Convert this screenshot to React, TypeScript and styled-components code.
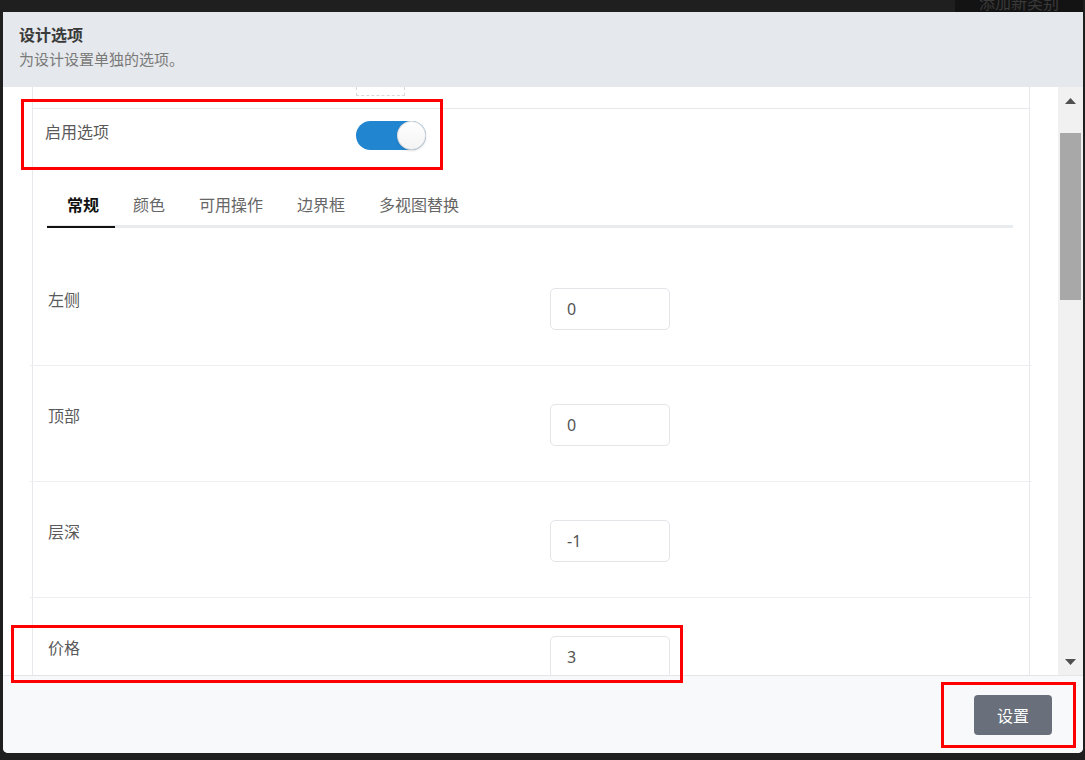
import React, { useState } from "react";
import styled, { createGlobalStyle } from "styled-components";

const GlobalStyle = createGlobalStyle`
  html, body {
    margin: 0;
    padding: 0;
    background: #1f1f1f;
  }
  body {
    font-family: "Noto Sans CJK SC", "Liberation Sans", sans-serif;
  }
`;

interface Field {
  id: string;
  label: string;
  value: string;
}

const fields: Field[] = [
  { id: "left", label: "左侧", value: "0" },
  { id: "top", label: "顶部", value: "0" },
  { id: "depth", label: "层深", value: "-1" },
  { id: "price", label: "价格", value: "3" },
];

const tabs = ["常规", "颜色", "可用操作", "边界框", "多视图替换"];

// red boxes drawn over the screenshot (annotation)
const marks = [
  { x: 21, y: 99, w: 422, h: 71 },
  { x: 11, y: 625, w: 672, h: 58 },
  { x: 941, y: 682, w: 135, h: 66 },
];

const Page = styled.div`
  position: relative;
  width: 1085px;
  height: 760px;
  overflow: hidden;
  background: #1f1f1f;
`;

const TopStrip = styled.div`
  height: 12px;
  display: flex;
  justify-content: flex-end;
  overflow: hidden;
`;

const BackButton = styled.div`
  width: 128px;
  margin-right: 2px;
  background: #131313;
  color: #3a3a3a;
  font-size: 16px;
  line-height: 22px;
  margin-top: -9px;
  height: 22px;
  text-align: center;
`;

const Modal = styled.div`
  margin-left: 3px;
  width: 1080px;
  height: 741px;
  display: flex;
  flex-direction: column;
  border-radius: 0 0 5px 5px;
  overflow: hidden;
  background: #fff;
`;

const Header = styled.div`
  height: 75px;
  box-sizing: border-box;
  padding: 11px 16px 0;
  background: #e5e8ec;
`;

const Title = styled.div`
  font-size: 16px;
  line-height: 22px;
  font-weight: 700;
  color: #3a3a3a;
`;

const Subtitle = styled.div`
  margin-top: 2px;
  font-size: 15px;
  line-height: 24px;
  color: #7a7a7a;
`;

const Body = styled.div`
  height: 588px;
  display: flex;
`;

const Content = styled.div`
  flex: 1;
  overflow: hidden;
  padding: 0 28px 0 29px;
`;

const Panel = styled.div`
  height: 100%;
  border-left: 1px solid #e6e8ec;
  border-right: 1px solid #e6e8ec;
`;

const DashedStub = styled.div`
  margin-left: 323px;
  width: 47px;
  height: 8px;
  border: 1px dashed #d9d9d9;
  border-top: none;
  margin-bottom: 12px;
`;

const EnableRow = styled.div`
  display: flex;
  align-items: flex-start;
  border-top: 1px solid #e6e8ec;
  padding: 12px 13px 33px 12px;
`;

const EnableLabel = styled.div`
  width: 311px;
  font-size: 16px;
  line-height: 22px;
  color: #5a5a5a;
  margin-top: -1px;
`;

const Toggle = styled.button<{ $on: boolean }>`
  position: relative;
  width: 70px;
  height: 29px;
  padding: 0;
  border: none;
  border-radius: 15px;
  background: ${(p) => (p.$on ? "#2185d0" : "#d4d4d5")};
  cursor: pointer;

  &::after {
    content: "";
    position: absolute;
    top: 0;
    left: ${(p) => (p.$on ? "41px" : "0")};
    width: 29px;
    height: 29px;
    border-radius: 50%;
    background: linear-gradient(#fff, #f3f3f4);
    box-shadow: 0 1px 2px 0 rgba(34, 36, 38, 0.15),
      0 0 0 1px rgba(34, 36, 38, 0.15) inset;
  }
`;

const TabBar = styled.div`
  display: flex;
  margin: 0 16px 0 14px;
  border-bottom: 3px solid #e9ecef;
`;

const Tab = styled.div<{ $active: boolean }>`
  position: relative;
  padding: 10px 14px 10px 20px;
  font-size: 16px;
  line-height: 22px;
  color: ${(p) => (p.$active ? "#111" : "#666")};
  font-weight: ${(p) => (p.$active ? 700 : 400)};
  cursor: pointer;

  &::after {
    content: "";
    display: ${(p) => (p.$active ? "block" : "none")};
    position: absolute;
    left: 0;
    right: -2px;
    bottom: -3px;
    height: 2px;
    background: #111;
  }
`;

const Form = styled.div`
  margin: 22px -3px 0;
`;

const FormRow = styled.div`
  display: grid;
  grid-template-columns: 502px 120px;
  padding: 38px 0 35px 18px;
  border-bottom: 1px solid #eceef1;
`;

const FieldLabel = styled.div`
  font-size: 16px;
  line-height: 22px;
  color: #5a5a5a;
`;

const NumberInput = styled.input`
  box-sizing: border-box;
  width: 120px;
  height: 42px;
  padding: 0 16px;
  border: 1px solid #e3e5e9;
  border-radius: 5px;
  font-family: "Noto Sans", "Liberation Sans", sans-serif;
  font-size: 16px;
  color: #555;
  outline: none;
`;

const Scrollbar = styled.div`
  width: 25px;
  display: flex;
  flex-direction: column;
  background: #f1f1f1;
`;

const ScrollButton = styled.div`
  height: 27px;
  display: flex;
  align-items: center;
  justify-content: center;
`;

const Track = styled.div`
  flex: 1;
  padding: 0 2px;
`;

const Thumb = styled.div<{ $offset: number; $size: number }>`
  margin-top: ${(p) => p.$offset}px;
  height: ${(p) => p.$size}px;
  background: #a8a8a8;
`;

const Footer = styled.div`
  flex: 1;
  display: flex;
  justify-content: flex-end;
  align-items: flex-start;
  box-sizing: border-box;
  padding: 19px 31px 0 0;
  border-top: 1px solid #e3e5e9;
  background: #f8f9fa;
`;

const SubmitButton = styled.button`
  width: 78px;
  height: 40px;
  border: none;
  border-radius: 4px;
  background: #6a707b;
  color: #fff;
  font-family: "Noto Sans CJK SC", "Liberation Sans", sans-serif;
  font-size: 16px;
  cursor: pointer;
`;

const Mark = styled.div`
  position: absolute;
  box-sizing: border-box;
  border: 3px solid #ff0000;
  pointer-events: none;
`;

const Arrow = ({ down }: { down?: boolean }) => (
  <svg width="11" height="6" viewBox="0 0 11 6">
    <path d={down ? "M0 0h11L5.5 6z" : "M0 6h11L5.5 0z"} fill="#505050" />
  </svg>
);

export default function App() {
  const [enabled, setEnabled] = useState(true);
  const [activeTab, setActiveTab] = useState(0);
  const [values, setValues] = useState<Record<string, string>>(
    Object.fromEntries(fields.map((f) => [f.id, f.value]))
  );

  return (
    <Page>
      <GlobalStyle />
      <TopStrip>
        <BackButton>添加新类别</BackButton>
      </TopStrip>
      <Modal>
        <Header>
          <Title>设计选项</Title>
          <Subtitle>为设计设置单独的选项。</Subtitle>
        </Header>
        <Body>
          <Content>
            <Panel>
              <DashedStub />
              <EnableRow>
                <EnableLabel>启用选项</EnableLabel>
                <Toggle $on={enabled} onClick={() => setEnabled(!enabled)} />
              </EnableRow>
              <TabBar>
                {tabs.map((t, i) => (
                  <Tab
                    key={t}
                    $active={i === activeTab}
                    onClick={() => setActiveTab(i)}
                  >
                    {t}
                  </Tab>
                ))}
              </TabBar>
              <Form>
                {fields.map((f) => (
                  <FormRow key={f.id}>
                    <FieldLabel>{f.label}</FieldLabel>
                    <NumberInput
                      value={values[f.id]}
                      onChange={(e) =>
                        setValues({ ...values, [f.id]: e.target.value })
                      }
                    />
                  </FormRow>
                ))}
              </Form>
            </Panel>
          </Content>
          <Scrollbar>
            <ScrollButton>
              <Arrow />
            </ScrollButton>
            <Track>
              <Thumb $offset={19} $size={167} />
            </Track>
            <ScrollButton>
              <Arrow down />
            </ScrollButton>
          </Scrollbar>
        </Body>
        <Footer>
          <SubmitButton>设置</SubmitButton>
        </Footer>
      </Modal>
      {marks.map((m, i) => (
        <Mark
          key={i}
          style={{ left: m.x, top: m.y, width: m.w, height: m.h }}
        />
      ))}
    </Page>
  );
}
